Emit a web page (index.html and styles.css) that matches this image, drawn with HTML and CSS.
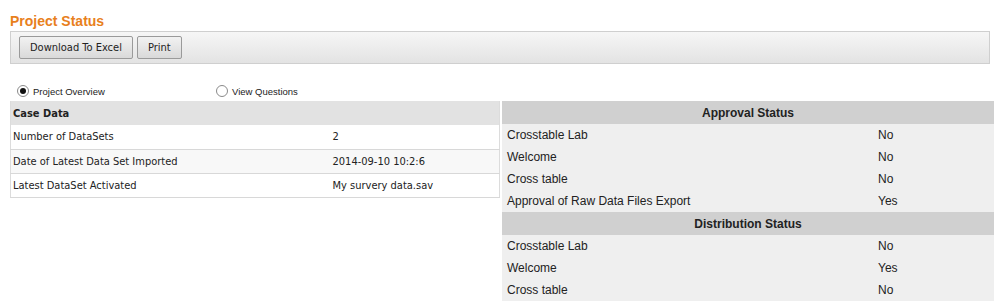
FILE: index.html
```html
<!DOCTYPE html>
<html lang="en">
<head>
    <meta charset="UTF-8">
    <title>Project Status</title>
    <link rel="stylesheet" href="styles.css">
</head>
<body>
    <div class="page">
        <h1 class="title">Project Status</h1>

        <!-- Toolbar -->
        <div class="toolbar">
            <button class="btn">Download To Excel</button>
            <button class="btn">Print</button>
        </div>

        <!-- View switch -->
        <div class="views">
            <label class="view view-first"><span class="radio checked"></span>Project Overview</label>
            <label class="view"><span class="radio"></span>View Questions</label>
        </div>

        <div class="panels">
            <table class="case-table">
                <tr><th colspan="2">Case Data</th></tr>
                <tr><td class="c-name">Number of DataSets</td><td>2</td></tr>
                <tr class="alt"><td class="c-name">Date of Latest Data Set Imported</td><td>2014-09-10 10:2:6</td></tr>
                <tr><td class="c-name">Latest DataSet Activated</td><td>My survery data.sav</td></tr>
            </table>

            <table class="status-table">
                <tr><th colspan="2">Approval Status</th></tr>
                <tr><td class="s-name">Crosstable Lab</td><td>No</td></tr>
                <tr><td class="s-name">Welcome</td><td>No</td></tr>
                <tr><td class="s-name">Cross table</td><td>No</td></tr>
                <tr><td class="s-name">Approval of Raw Data Files Export</td><td>Yes</td></tr>
                <tr><th colspan="2">Distribution Status</th></tr>
                <tr><td class="s-name">Crosstable Lab</td><td>No</td></tr>
                <tr><td class="s-name">Welcome</td><td>Yes</td></tr>
                <tr><td class="s-name">Cross table</td><td>No</td></tr>
            </table>
        </div>
    </div>
</body>
</html>
```

FILE: styles.css
```css
* { margin: 0; padding: 0; box-sizing: border-box; }
body {
    font-family: 'Liberation Sans', Arial, sans-serif;
    background: #fff;
    color: #222;
}

.page {
    padding: 13px 0 0 10px;
}

.title {
    color: #e8801c;
    font-size: 14px;
    font-weight: bold;
    line-height: 17px;
    margin-bottom: 1px;
}

.toolbar {
    width: 980px;
    height: 33px;
    border: 1px solid #cfcfcf;
    background: linear-gradient(#f6f6f6, #e3e3e3);
    display: flex;
    align-items: center;
    gap: 4px;
    padding: 0 8px;
}

.btn {
    font-family: 'DejaVu Sans Condensed', 'DejaVu Sans', sans-serif;
    font-size: 11px;
    height: 23px;
    padding: 0 10px;
    color: #222;
    border: 1px solid #9a9a9a;
    border-radius: 2px;
    background: linear-gradient(#f2f2f2, #d9d9d9);
}

.views {
    display: flex;
    align-items: center;
    height: 37px;
    padding-top: 17px;
    font-size: 9.5px;
    color: #222;
}

.view {
    display: flex;
    align-items: center;
    gap: 4px;
}

.view-first {
    margin-left: 7px;
    width: 199px;
}

.radio {
    width: 12px;
    height: 12px;
    border-radius: 50%;
    border: 1px solid #8a8a8a;
    background: #fff;
    position: relative;
}

.radio.checked::after {
    content: '';
    position: absolute;
    left: 2px;
    top: 2px;
    width: 6px;
    height: 6px;
    border-radius: 50%;
    background: #111;
}

.panels {
    display: flex;
    align-items: flex-start;
    gap: 2px;
}

table {
    border-collapse: collapse;
    flex-shrink: 0;
}

.case-table {
    width: 490px;
    font-family: 'DejaVu Sans Condensed', 'DejaVu Sans', sans-serif;
    font-size: 11px;
    border-left: 1px solid #dcdcdc;
    border-right: 1px solid #dcdcdc;
}

.case-table th {
    background: #e2e2e2;
    text-align: left;
    height: 24px;
    padding: 0 2px;
    font-weight: bold;
}

.case-table td {
    height: 24px;
    padding: 0 2px;
    border-bottom: 1px solid #d8d8d8;
    background: #fff;
}

.case-table tr.alt td {
    background: #f8f8f8;
}

.case-table .c-name {
    width: 320px;
}

.status-table {
    width: 492px;
    font-size: 12px;
    background: #efefef;
}

.status-table th {
    background: #d0d0d0;
    height: 23px;
    text-align: center;
    font-weight: bold;
}

.status-table td {
    height: 22px;
    padding: 0 5px;
}

.status-table .s-name {
    width: 371px;
}
```
